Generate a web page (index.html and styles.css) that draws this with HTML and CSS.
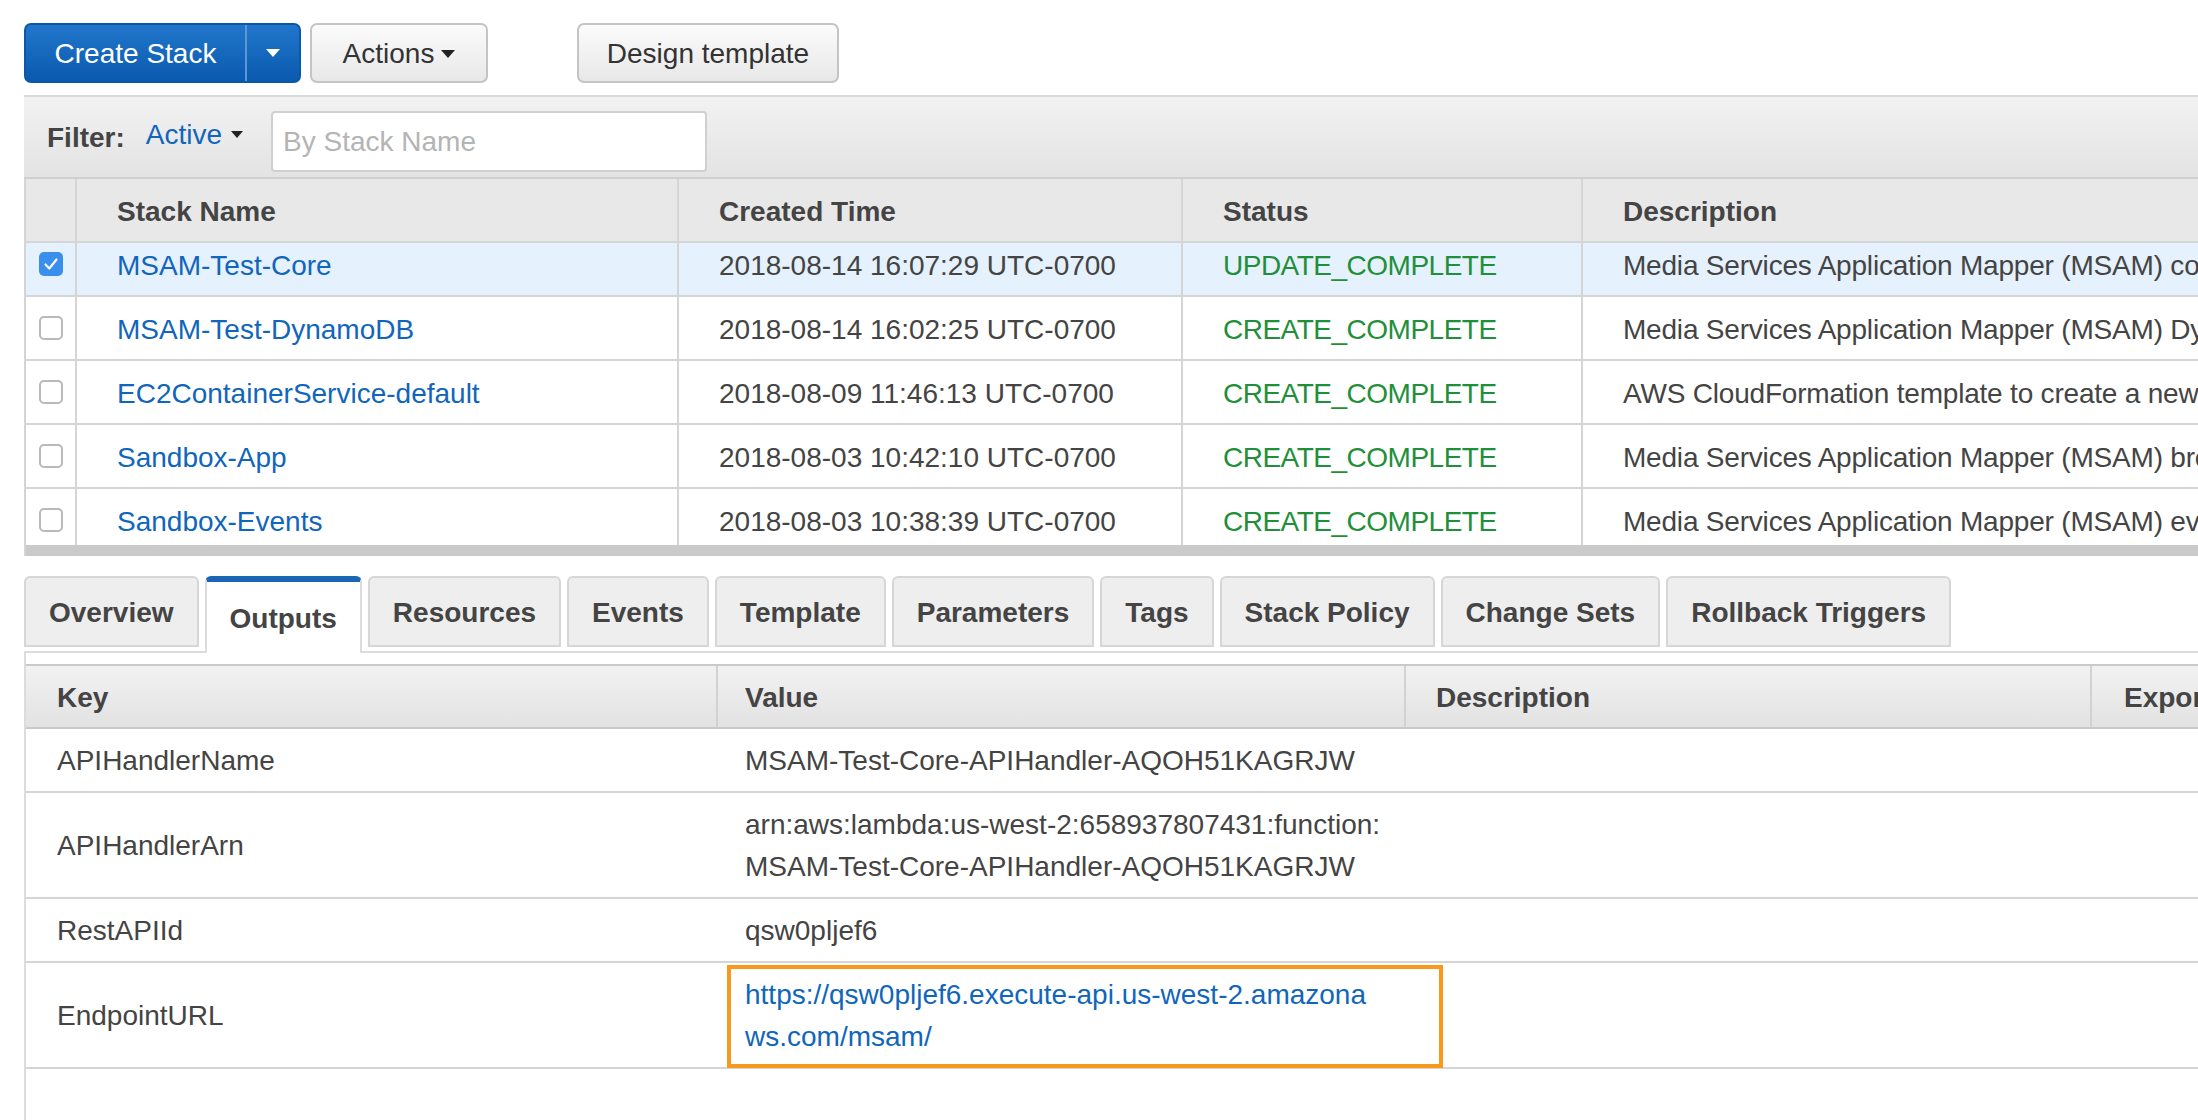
FILE: index.html
```html
<!DOCTYPE html>
<html lang="en">
<head>
<meta charset="utf-8">
<title>CloudFormation Stacks</title>
<link rel="stylesheet" href="styles.css">
</head>
<body>
<div class="page">
  <div class="toolbar">
    <div class="split-btn">
      <span class="btn-main">Create Stack</span>
      <span class="btn-drop"><i class="caret caret-white"></i></span>
    </div>
    <button class="btn btn-actions">Actions <i class="caret"></i></button>
    <button class="btn btn-design">Design template</button>
  </div>

  <div class="filterbar">
    <span class="filter-label">Filter:</span>
    <span class="filter-active">Active</span><i class="caret caret-filter"></i>
    <div class="filter-input">By Stack Name</div>
  </div>

  <div class="stack-table">
    <div class="st-row st-head">
      <div class="st-cell st-check"></div>
      <div class="st-cell">Stack Name</div>
      <div class="st-cell">Created Time</div>
      <div class="st-cell">Status</div>
      <div class="st-cell">Description</div>
    </div>
    <div class="st-body">
      <div class="st-scroll">
        <div class="st-row selected">
          <div class="st-cell st-check"><span class="cb checked"><svg width="24" height="24" viewBox="0 0 24 24"><path d="M6.5 12.5l3.8 4 7.2-9" fill="none" stroke="#fff" stroke-width="2.2" stroke-linecap="round" stroke-linejoin="round"/></svg></span></div>
          <div class="st-cell link">MSAM-Test-Core</div>
          <div class="st-cell">2018-08-14 16:07:29 UTC-0700</div>
          <div class="st-cell ok">UPDATE_COMPLETE</div>
          <div class="st-cell desc-text">Media Services Application Mapper (MSAM) core resources</div>
        </div>
        <div class="st-row">
          <div class="st-cell st-check"><span class="cb"></span></div>
          <div class="st-cell link">MSAM-Test-DynamoDB</div>
          <div class="st-cell">2018-08-14 16:02:25 UTC-0700</div>
          <div class="st-cell ok">CREATE_COMPLETE</div>
          <div class="st-cell desc-text">Media Services Application Mapper (MSAM) DynamoDB tables</div>
        </div>
        <div class="st-row">
          <div class="st-cell st-check"><span class="cb"></span></div>
          <div class="st-cell link">EC2ContainerService-default</div>
          <div class="st-cell">2018-08-09 11:46:13 UTC-0700</div>
          <div class="st-cell ok">CREATE_COMPLETE</div>
          <div class="st-cell desc-text">AWS CloudFormation template to create a new VPC</div>
        </div>
        <div class="st-row">
          <div class="st-cell st-check"><span class="cb"></span></div>
          <div class="st-cell link">Sandbox-App</div>
          <div class="st-cell">2018-08-03 10:42:10 UTC-0700</div>
          <div class="st-cell ok">CREATE_COMPLETE</div>
          <div class="st-cell desc-text">Media Services Application Mapper (MSAM) browser application</div>
        </div>
        <div class="st-row">
          <div class="st-cell st-check"><span class="cb"></span></div>
          <div class="st-cell link">Sandbox-Events</div>
          <div class="st-cell">2018-08-03 10:38:39 UTC-0700</div>
          <div class="st-cell ok">CREATE_COMPLETE</div>
          <div class="st-cell desc-text">Media Services Application Mapper (MSAM) event handling</div>
        </div>
      </div>
    </div>
    <div class="scrollbar"></div>
  </div>

  <div class="tabs">
    <div class="tab">Overview</div>
    <div class="tab active">Outputs</div>
    <div class="tab">Resources</div>
    <div class="tab">Events</div>
    <div class="tab">Template</div>
    <div class="tab">Parameters</div>
    <div class="tab">Tags</div>
    <div class="tab">Stack Policy</div>
    <div class="tab">Change Sets</div>
    <div class="tab">Rollback Triggers</div>
  </div>

  <div class="panel">
    <div class="out-row out-head">
      <div class="out-cell key">Key</div>
      <div class="out-cell val">Value</div>
      <div class="out-cell desc">Description</div>
      <div class="out-cell exp">Export Name</div>
    </div>
    <div class="out-row">
      <div class="out-cell key">APIHandlerName</div>
      <div class="out-cell val">MSAM-Test-Core-APIHandler-AQOH51KAGRJW</div>
      <div class="out-cell desc"></div>
      <div class="out-cell exp"></div>
    </div>
    <div class="out-row">
      <div class="out-cell key">APIHandlerArn</div>
      <div class="out-cell val">arn:aws:lambda:us-west-2:658937807431:function:<br>MSAM-Test-Core-APIHandler-AQOH51KAGRJW</div>
      <div class="out-cell desc"></div>
      <div class="out-cell exp"></div>
    </div>
    <div class="out-row">
      <div class="out-cell key">RestAPIId</div>
      <div class="out-cell val">qsw0pljef6</div>
      <div class="out-cell desc"></div>
      <div class="out-cell exp"></div>
    </div>
    <div class="out-row">
      <div class="out-cell key">EndpointURL</div>
      <div class="out-cell val url"><span class="link">https://qsw0pljef6.execute-api.us-west-2.amazona<br>ws.com/msam/</span><span class="highlight"></span></div>
      <div class="out-cell desc"></div>
      <div class="out-cell exp"></div>
    </div>
  </div>
</div>
</body>
</html>
```

FILE: styles.css
```css
html, body {
  margin: 0;
  padding: 0;
  overflow: hidden;
  background: #fff;
}
body {
  width: 2198px;
  height: 1120px;
  font-family: "Liberation Sans", Arial, Helvetica, sans-serif;
  font-size: 28px;
  color: #444;
}
* { box-sizing: border-box; }

.page {
  width: 2500px;
  padding: 23px 0 0 24px;
}

/* ---------- toolbar ---------- */
.toolbar {
  display: flex;
  height: 60px;
}
.split-btn {
  display: flex;
  height: 60px;
  border: 2px solid #0c58a8;
  border-radius: 7px;
  background: linear-gradient(#2176cb, #0a5aae);
  color: #fff;
}
.btn-main {
  width: 219px;
  display: flex;
  align-items: center;
  justify-content: center;
  padding-top: 2px;
}
.btn-drop {
  width: 54px;
  border-left: 2px solid #5b97d6;
  display: flex;
  align-items: center;
  justify-content: center;
}
.caret {
  display: inline-block;
  width: 0;
  height: 0;
  border-left: 7px solid transparent;
  border-right: 7px solid transparent;
  border-top: 8px solid #222;
}
.caret-white { border-top-color: #fff; }

.btn {
  height: 60px;
  border: 2px solid #c4c4c4;
  border-radius: 7px;
  background: linear-gradient(#fbfbfb, #e8e8e8);
  color: #333;
  font: inherit;
  display: flex;
  align-items: center;
  justify-content: center;
  gap: 7px;
  padding: 2px 0 0 0;
}
.btn-actions { width: 178px; margin-left: 9px; }
.btn-design { width: 262px; margin-left: 89px; }

/* ---------- filter ---------- */
.filterbar {
  margin-top: 12px;
  height: 84px;
  border-top: 2px solid #dadada;
  border-bottom: 2px solid #cfcfcf;
  background: linear-gradient(#f2f2f2, #e3e3e3);
  display: flex;
  align-items: center;
  padding-left: 23px;
}
.filter-label {
  font-weight: bold;
  color: #444;
  margin-right: 21px;
  margin-top: 2px;
}
.filter-active {
  color: #1166bb;
  margin-top: -4px;
}
.caret-filter {
  margin-left: 9px;
  margin-top: -6px;
  border-left-width: 6px;
  border-right-width: 6px;
  border-top-width: 7px;
}
.filter-input {
  margin-left: 28px;
  margin-top: 8px;
  width: 436px;
  height: 61px;
  border: 2px solid #d0d0d0;
  border-radius: 4px;
  background: #fff;
  color: #b4b4b4;
  display: flex;
  align-items: center;
  padding-left: 10px;
  padding-top: 2px;
}

/* ---------- stack table ---------- */
.stack-table {
  border-left: 2px solid #d5d5d5;
}
.st-row {
  display: grid;
  grid-template-columns: 51px 602px 504px 400px 1fr;
  height: 64px;
  border-bottom: 2px solid #d5d5d5;
}
.st-head {
  background: #e8e8e8;
  font-weight: bold;
  color: #444;
}
.st-cell {
  border-right: 2px solid #d5d5d5;
  display: flex;
  align-items: center;
  padding-left: 40px;
  padding-top: 3px;
  white-space: nowrap;
  overflow: hidden;
}
.st-cell.st-check {
  padding-left: 0;
  padding-top: 0;
  justify-content: center;
}
.st-body {
  height: 302px;
  overflow: hidden;
}
.st-scroll {
  margin-top: -10px;
}
.st-row.selected { background: #e5f1fd; }
.link { color: #1166bb; }
.ok { color: #1f8f3a; letter-spacing: -0.5px; }
.desc-text { letter-spacing: -0.2px; }

.cb {
  width: 24px;
  height: 24px;
  border: 2px solid #b9b9b9;
  border-radius: 5px;
  background: #fff;
  display: block;
}
.cb.checked {
  border: none;
  background: #3a8eec;
}
.cb svg { display: block; }

.scrollbar {
  height: 11px;
  background: #cacaca;
}

/* ---------- tabs ---------- */
.tabs {
  margin-top: 20px;
  display: flex;
  align-items: flex-start;
  gap: 6px;
  height: 77px;
  border-bottom: 2px solid #dcdcdc;
}
.tab {
  height: 71px;
  border: 2px solid #d6d6d6;
  border-radius: 6px 6px 0 0;
  background: #eeeeee;
  padding: 2px 23px 0 23px;
  display: flex;
  align-items: center;
  font-weight: bold;
  color: #444;
  white-space: nowrap;
}
.tab.active {
  height: 77px;
  background: #fff;
  border-top: 6px solid #1a66b5;
  border-bottom: none;
  border-color: #1a66b5 #dcdcdc #dcdcdc #dcdcdc;
}

/* ---------- outputs ---------- */
.panel {
  border-left: 2px solid #dcdcdc;
  padding-top: 11px;
  height: 467px;
}
.out-row {
  display: grid;
  grid-template-columns: 692px 688px 686px 1fr;
  align-items: center;
  border-bottom: 2px solid #d5d5d5;
}
.out-head {
  height: 65px;
  border-top: 2px solid #c9c9c9;
  border-bottom: 2px solid #c9c9c9;
  background: linear-gradient(#f2f2f2, #e2e2e2);
  font-weight: bold;
  align-items: stretch;
}
.out-head .out-cell {
  border-right: 2px solid #d2d2d2;
  display: flex;
  align-items: center;
  padding-top: 3px;
  padding-bottom: 0;
}
.out-cell {
  padding: 11px 30px 9px 30px;
  line-height: 42px;
  white-space: nowrap;
}
.out-cell.key { padding-left: 31px; }
.out-cell.val { padding-left: 27px; }
.out-cell.exp { padding-left: 32px; }
.out-cell.url { position: relative; }
.highlight {
  position: absolute;
  left: 9px;
  top: 2px;
  width: 716px;
  height: 103px;
  border: 4px solid #f8991c;
}
```
